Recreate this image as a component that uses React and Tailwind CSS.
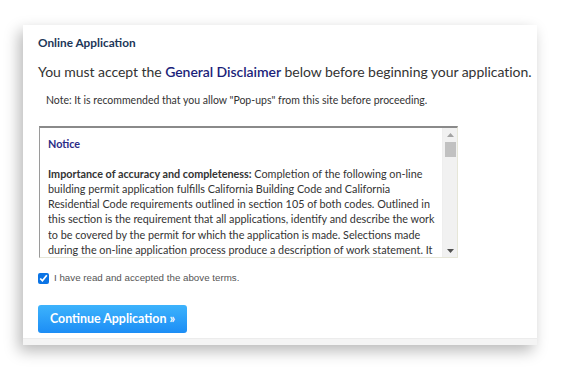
import React, { useState } from 'react';

const Scrollbar = () => (
  <div className="w-[15px] shrink-0 bg-[#f1f1f1] border-l border-[#eeeeee] flex flex-col items-center">
    <div className="h-[13px] flex items-center justify-center">
      <svg width="7" height="4" viewBox="0 0 7 4">
        <path d="M0 4 L3.5 0 L7 4 Z" fill="#a3a3a3" />
      </svg>
    </div>
    <div className="w-[11px] h-[15px] bg-[#c1c1c1] mt-[1px]" />
    <div className="flex-1" />
    <div className="h-[13px] flex items-center justify-center">
      <svg width="7" height="4" viewBox="0 0 7 4">
        <path d="M0 0 L7 0 L3.5 4 Z" fill="#505050" />
      </svg>
    </div>
  </div>
);

const App = () => {
  const [accepted, setAccepted] = useState(true);

  return (
    <div className="min-h-[367px] bg-white pt-[25px] pl-[23px]" style={{ fontFamily: 'Lato, "Open Sans", sans-serif' }}>
      <div className="w-[514px] bg-white shadow-[-4px_6px_14px_rgba(0,0,0,0.28)]">
        <div className="pl-[15px] pt-[10px]">
          <h1 className="text-[11.8px] font-bold text-[#1c3658] leading-[15px]">Online Application</h1>
          <p className="mt-[12px] text-[14px] tracking-[-0.05px] text-[#333333] leading-[20px] whitespace-nowrap">
            You must accept the <span className="text-[#1b1f7a] font-semibold">General Disclaimer</span> below before beginning your application.
          </p>
          <p className="mt-[12px] pl-[8px] text-[10.5px] text-[#333333] leading-[12px]">
            Note: It is recommended that you allow "Pop-ups" from this site before proceeding.
          </p>

          <div className="mt-[20px] ml-[1px] w-[419px] h-[132px] flex border-t-2 border-t-[#8a8a8a] border-l border-l-[#9a9a9a] border-b border-b-[#e6e6d8] border-r border-r-[#e6e6d8] overflow-hidden">
            <div className="flex-1 pl-[8px] pr-[3px] pt-[8px] text-[10.8px] leading-[15.2px] text-[#333333] overflow-hidden">
              <div className="h-[121px] overflow-hidden">
                <div className="font-bold text-[#2b2b86]">Notice</div>
                <p className="mt-[14.5px]">
                  <span className="font-bold">Importance of accuracy and completeness:</span> Completion of the following on-line building permit application fulfills California Building Code and California Residential Code requirements outlined in section 105 of both codes. Outlined in this section is the requirement that all applications, identify and describe the work to be covered by the permit for which the application is made. Selections made during the on-line application process produce a description of work statement. It is the responsibility of the applicant to verify that this statement is accurate and complete.
                </p>
              </div>
            </div>
            <Scrollbar />
          </div>

          <label className="mt-[14px] flex items-center gap-[5px] text-[9.75px] leading-[12px] text-[#555555]" style={{ fontFamily: '"Liberation Sans", Arial, sans-serif' }}>
            <input
              type="checkbox"
              checked={accepted}
              onChange={(e) => setAccepted(e.target.checked)}
              className="w-[11px] h-[11px] m-0 accent-[#0b74e5]"
            />
            I have read and accepted the above terms.
          </label>

          <button className="mt-[21px] h-[28px] w-[149px] rounded-[3px] bg-gradient-to-b from-[#3db3fc] to-[#1c8df5] text-white text-[12.4px] leading-[28px] font-bold">
            Continue Application »
          </button>
        </div>
        <div className="mt-[5px] h-[7px] bg-[#f4f4f4] border-t border-[#ececec]" />
      </div>
    </div>
  );
};

export default App;
